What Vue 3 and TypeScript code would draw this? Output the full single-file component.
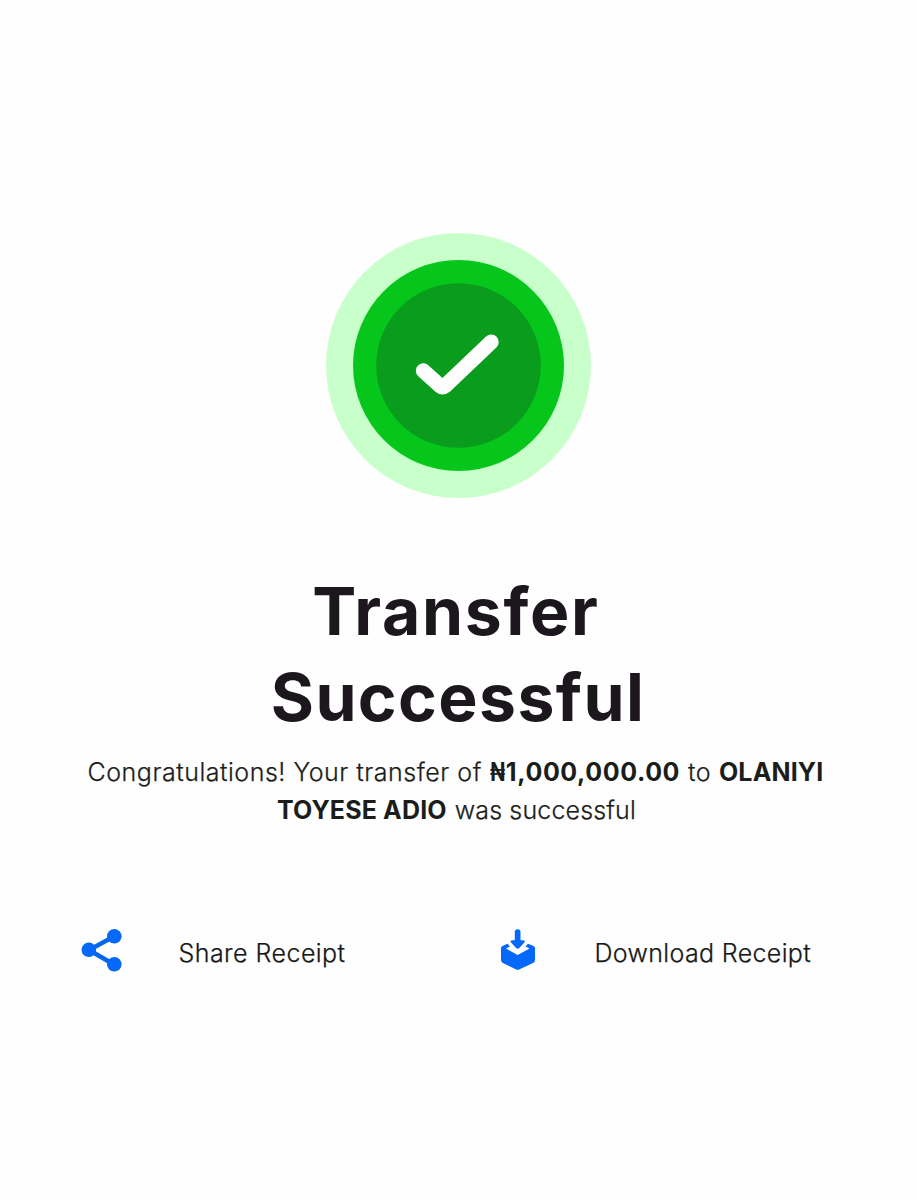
<script setup lang="ts">
interface Transfer {
  currency: string
  amount: string
  firstName: string
  otherNames: string
}

const transfer: Transfer = {
  currency: '₦',
  amount: '1,000,000.00',
  firstName: 'OLANIYI',
  otherNames: 'TOYESE ADIO',
}
</script>

<template>
  <main class="screen">
    <svg class="badge" viewBox="0 0 266 267" role="img" aria-label="Success">
      <circle class="halo" cx="132.500" cy="133.500" r="132.500" />
      <circle class="ring" cx="132.500" cy="133.500" r="105.500" />
      <circle class="disc" cx="132.500" cy="133.500" r="82.300" />
      <path class="tick" d="M97.300 138.700 L114.200 154 Q116.600 156 119 154 L165.200 110" />
    </svg>

    <h1 class="title">
      <span class="title-line first">Transfer</span>
      <span class="title-line second">Successful</span>
    </h1>

    <p class="message">
      <span class="line">
        <span class="intro">Congratulations! Your transfer of</span>
        <strong class="amount"><span class="currency">{{ transfer.currency }}</span>{{ transfer.amount }}</strong>
        <span class="to">to</span>
        <strong class="name">{{ transfer.firstName }}</strong>
      </span>
      <span class="line">
        <strong class="name">{{ transfer.otherNames }}</strong>
        <span class="outcome">was successful</span>
      </span>
    </p>

    <div class="actions">
      <button class="action share" type="button">
        <svg class="icon" viewBox="0 0 42 44" aria-hidden="true">
          <path class="link" d="M33 8.500 L8 22 L33 36.500" />
          <circle cx="33.300" cy="8.300" r="7.300" />
          <circle cx="7.800" cy="21.800" r="7.300" />
          <circle cx="33.300" cy="36.300" r="7.300" />
        </svg>
        <span class="label">Share Receipt</span>
      </button>
      <button class="action download" type="button">
        <svg class="icon" viewBox="0 0 42 44" aria-hidden="true">
          <path d="M17.800 3.800 Q17.800 1.300 20.700 1.300 Q23.500 1.300 23.500 3.800 V12.300 H26 Q28.800 12.600 27.300 14.600 L22.300 20 Q20.700 21.500 19.100 20 L14.100 14.600 Q12.600 12.600 15.400 12.300 H17.800 Z" />
          <path d="M4 20 Q4 18.800 5.500 18 L10.500 15.800 L13 18.600 L9 20.600 L20.700 27 L32.500 20.600 L28.500 18.600 L31 15.800 L36.500 18 Q38 18.800 38 20 V32 Q38 33.800 36.500 34.700 L22.700 41.200 Q20.700 42.200 18.700 41.200 L5.500 34.700 Q4 33.800 4 32 Z" />
        </svg>
        <span class="label">Download Receipt</span>
      </button>
    </div>
  </main>
</template>

<style>
body {
  margin: 0;
  background: #fefefe;
}
</style>

<style scoped>
.screen {
  box-sizing: border-box;
  width: 917px;
  height: 1200px;
  padding: 232px 2px 0 0;
  display: flex;
  flex-direction: column;
  align-items: center;
  background: #fefefe;
  color: #1b1d1b;
  font-family: Inter, "Liberation Sans", sans-serif;
  overflow: hidden;
}

.badge {
  width: 266px;
  height: 267px;
  margin-left: 2px;
  flex: none;
}

.halo { fill: #c9ffca; }
.ring { fill: #06c61b; }
.disc { fill: #0a9c1c; }

.tick {
  fill: none;
  stroke: #fefefe;
  stroke-width: 15;
  stroke-linecap: round;
  stroke-linejoin: round;
}

.title {
  margin: 69px 0 0;
  display: flex;
  flex-direction: column;
  align-items: center;
  color: #1b171d;
  font-size: 66px;
  font-weight: 700;
  line-height: 86px;
}

.title-line {
  white-space: nowrap;
}

.first {
  margin-right: 3px;
  letter-spacing: 1.7px;
}

.second {
  margin-left: 1px;
  letter-spacing: 1.4px;
}

.message {
  margin: 13px 0 0;
  display: flex;
  flex-direction: column;
  align-items: center;
  font-size: 25px;
  font-weight: 300;
  line-height: 38px;
}

.line {
  display: flex;
  gap: 8px;
  white-space: nowrap;
}

.line:first-child { margin-right: 4px; }
.line:last-child { margin-right: 2px; }

.message strong { font-weight: 700; }

.intro,
.to,
.outcome,
.label {
  -webkit-text-stroke: 0.25px currentColor;
}

.intro { letter-spacing: 0.52px; }
.message .amount { letter-spacing: 0.6px; }
.to { letter-spacing: 0.4px; }
.name { letter-spacing: 0.15px; }
.outcome { letter-spacing: 0.15px; }

.currency {
  display: inline-block;
  margin-right: -3.500px;
  transform: scaleX(0.8);
  transform-origin: left center;
}

.actions {
  width: 757px;
  margin: 96px 0 0 4px;
  display: grid;
  grid-template-columns: 416px 1fr;
}

.action {
  display: flex;
  align-items: center;
  gap: 55.500px;
  padding: 0;
  border: 0;
  background: none;
  color: #161816;
  font: inherit;
  font-size: 25px;
  font-weight: 300;
  line-height: 44px;
  white-space: nowrap;
}

.icon {
  width: 42px;
  height: 44px;
  flex: none;
  fill: #0668f8;
}

.link {
  fill: none;
  stroke: #0668e8;
  stroke-width: 4.500;
}

.label {
  padding-top: 6px;
  letter-spacing: 0.45px;
}

.download .label {
  padding-top: 5px;
  letter-spacing: 0.35px;
}
</style>
